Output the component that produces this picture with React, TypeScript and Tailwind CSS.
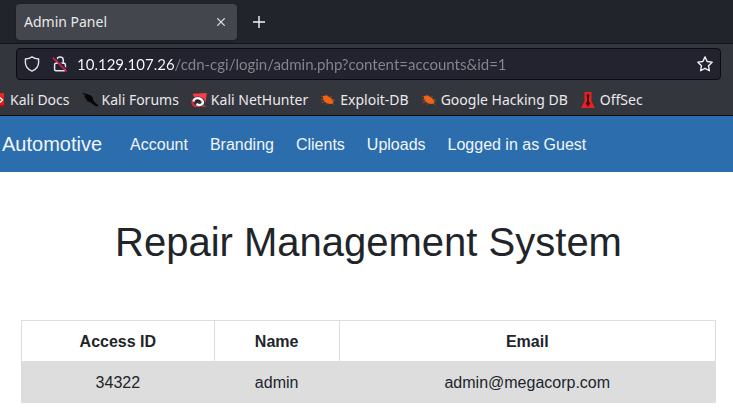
import type { ReactNode } from "react";

const uiFont = "font-['Noto_Sans',sans-serif]";

function ShieldIcon() {
  return (
    <svg className="h-4 w-4 shrink-0" viewBox="0 0 16 16" fill="none" stroke="#e4e4ea" strokeWidth="1.4" strokeLinejoin="round" aria-hidden="true">
      <path d="M8 .9C6.200 2.200 3.800 2.900 1.400 3v3.600c0 3.900 2.800 7 6.600 8.600 3.800-1.600 6.600-4.700 6.600-8.600V3C12.200 2.900 9.800 2.200 8 .9Z" />
    </svg>
  );
}

function InsecureLockIcon() {
  return (
    <svg className="h-4 w-4 shrink-0" viewBox="0 0 16 16" fill="none" strokeWidth="1.5" aria-hidden="true">
      <g stroke="#e4e4ea">
        <path d="M4.900 7V4.300a3.200 3.200 0 0 1 6.400 0V7" />
        <rect x="2.600" y="7.200" width="10.800" height="7.600" rx="1.300" />
      </g>
      <path d="M2 .8 15 13.800" stroke="#22232e" strokeWidth="1.500" />
      <path d="M.8 1.600 14.600 15.400" stroke="#e2184d" strokeWidth="1.500" />
    </svg>
  );
}

function StarIcon() {
  return (
    <svg className="h-4 w-4" viewBox="0 0 16 16" fill="none" stroke="#f0f0f4" strokeWidth="1.400" strokeLinejoin="round" aria-hidden="true">
      <path d="m8 .9 2.150 4.600 5 .65-3.650 3.500.9 5.100L8 12.300l-4.400 2.450.9-5.100L.85 6.150l5-.65Z" />
    </svg>
  );
}

function DocsIcon() {
  return (
    <svg className="h-4 w-4 shrink-0" viewBox="0 0 16 16" aria-hidden="true">
      <rect y="1" width="14" height="4" fill="#e8281c" />
      <rect y="5" width="14" height="9" fill="#f01414" />
      <rect y="13" width="14" height="2" fill="#9c1414" />
      <path d="M7 6h3.500L12.500 8l-2 2H7" fill="none" stroke="#fff" strokeWidth="1.500" />
    </svg>
  );
}

function ForumsIcon() {
  return (
    <svg className="h-4 w-4 shrink-0" viewBox="0 0 16 16" fill="#050505" aria-hidden="true">
      <path d="M0 .8 4.500 2 8.500 3.300 10.800 5.400 11.200 8.200 13.300 11l2.700 2-.6 1.600-2.700-.9-3.600-3L6.800 9.800 4 9l2-.6L2.400 6.200l2.300.3L1.500 3.700l2.600.5Z" />
    </svg>
  );
}

function NetHunterIcon() {
  return (
    <svg className="h-4 w-4 shrink-0" viewBox="0 0 16 16" aria-hidden="true">
      <path d="M1.500 1.800 15.800 1 14.500 10.500 12.500 6.500 8 4.500 3 5Z" fill="#ff3b44" />
      <path d="M.5 8.500 2.500 6 4 7 2.500 11 4 13.200h3.500L9 15H3L.5 12ZM10 14.800l4-2 .8 2.200Z" fill="#e0283a" />
      <path d="M2.500 9.500C3 6.500 5.500 5.600 8.300 6.400 12 7.800 13 10.800 10.600 12.600 9 13.500 7 13 5.500 12" fill="none" stroke="#fff" strokeWidth="2.300" />
      <path d="M4.300 10C5.500 8.300 7.500 8.300 8.800 9.600" fill="none" stroke="#2a1418" strokeWidth="1.200" />
    </svg>
  );
}

function ExploitIcon() {
  return (
    <svg className="h-4 w-4 shrink-0" viewBox="0 0 16 16" fill="#f06414" aria-hidden="true">
      <path d="M3 4C5 2.800 7.500 3.500 9.500 5c2.500 1.600 3.800 3.500 3.800 6.200-2.500 1.300-5.300.8-7.500-.7C3.500 9 2.500 6.500 3 4Z" />
      <path d="M3.500 5 1 4.500M4 7.500l-3 .3M5 9.500l-3.500 1.200M7.500 11.500l-2 .8M7 4 6.500 2.500M9.500 5.500 12 4M11.500 7.500h3M12.500 9.200l2.500-.3M12.500 11l1.500 2" fill="none" stroke="#b8561f" strokeWidth=".7" />
    </svg>
  );
}

function OffSecIcon() {
  return (
    <svg className="h-4 w-4 shrink-0" viewBox="0 0 16 16" aria-hidden="true">
      <path d="M4.500 0h7v9l3.500 7H1l3.500-7Z" fill="#e82020" />
      <path d="M8 1.500 9.800 3.800 8.900 5v4l1.500 3-1.700 1v1.600H7.300V13l-1.700-1 1.500-3V5l-.9-1.200Z" fill="#3a0d12" />
    </svg>
  );
}

function Bookmark({ icon, children }: { icon: ReactNode; children: ReactNode }) {
  return (
    <a href="#" className="flex shrink-0 items-center gap-1 whitespace-nowrap">
      {icon}
      {children}
    </a>
  );
}

function BrowserChrome() {
  return (
    <header className={`${uiFont} border-b border-[#0c0c0f] bg-[#34363e] text-[#e9e9ec]`}>
      <div className="flex h-11 items-center border-b border-[#15161b] bg-[#22242c] px-4">
        <div className="flex h-9 w-[221px] items-center justify-between rounded-sm bg-[#43464d] px-2 text-sm shadow">
          <span>Admin Panel</span>
          <button type="button" aria-label="Close tab" className="flex h-4 w-4 items-center justify-center">
            <svg className="h-2 w-2" viewBox="0 0 8 8" stroke="#e4e4e6" strokeWidth="1.200" aria-hidden="true">
              <path d="m.3.3 7.400 7.400M7.700.3.300 7.700" />
            </svg>
          </button>
        </div>
        <button type="button" aria-label="New tab" className="ml-3 flex h-5 w-5 items-center justify-center">
          <svg className="h-3 w-3" viewBox="0 0 12 12" stroke="#f4f4f6" strokeWidth="1.400" aria-hidden="true">
            <path d="M6 0v12M0 6h12" />
          </svg>
        </button>
      </div>
      <div className="py-1 pr-3 pl-4">
        <div className="flex h-8 items-center rounded-sm border border-[#0c0c10] bg-[#22232e] px-[7px]">
          <ShieldIcon />
          <span className="ml-3 flex">
            <InsecureLockIcon />
          </span>
          <input
            type="text"
            aria-label="Address"
            defaultValue="10.129.107.26/cdn-cgi/login/admin.php?content=accounts&id=1"
            className="ml-[9px] min-w-0 flex-1 bg-[linear-gradient(to_right,#fbfbfe_98px,#85868f_98px)] bg-clip-text font-['Lato',sans-serif] text-[15px] text-transparent outline-none"
          />
          <button type="button" aria-label="Bookmark this page">
            <StarIcon />
          </button>
        </div>
      </div>
      <nav aria-label="Bookmarks" className="-ml-[10px] flex h-[31px] items-center gap-3 overflow-hidden text-sm">
        <Bookmark icon={<DocsIcon />}>Kali Docs</Bookmark>
        <Bookmark icon={<ForumsIcon />}>Kali Forums</Bookmark>
        <Bookmark icon={<NetHunterIcon />}>Kali NetHunter</Bookmark>
        <Bookmark icon={<ExploitIcon />}>Exploit-DB</Bookmark>
        <Bookmark icon={<ExploitIcon />}>Google Hacking DB</Bookmark>
        <Bookmark icon={<OffSecIcon />}>OffSec</Bookmark>
      </nav>
    </header>
  );
}

export default function App() {
  return (
    <div className="overflow-hidden bg-white font-['Liberation_Sans',Arial,sans-serif] text-base text-[#212529]">
      <BrowserChrome />
      <nav aria-label="Main" className="flex h-14 items-center gap-7 bg-[#2c6dad] pl-[2px] whitespace-nowrap text-[#f1f6fb]">
        <a href="#" className="text-xl">Automotive</a>
        <div className="flex gap-[22px] pt-[2px]">
          <a href="#">Account</a>
          <a href="#">Branding</a>
          <a href="#">Clients</a>
          <a href="#">Uploads</a>
          <a href="#">Logged in as Guest</a>
        </div>
      </nav>
      <main className="pt-[46px] pr-[17px] pb-2 pl-[21px]">
        <h1 className="text-center text-[40px] leading-[48px]">Repair Management System</h1>
        <table className="mt-[54px] w-full border-collapse border border-[#dddddd] text-center">
          <thead>
            <tr>
              <th scope="col" className="border border-[#dddddd] px-2 pt-[9px] pb-[7px]">Access ID</th>
              <th scope="col" className="border border-[#dddddd] px-2 pt-[9px] pb-[7px]">Name</th>
              <th scope="col" className="border border-[#dddddd] px-2 pt-[9px] pb-[7px]">Email</th>
            </tr>
          </thead>
          <tbody>
            <tr className="bg-[#dddddd]">
              <td className="border border-[#dddddd] px-2 pt-[9px] pb-[7px]">34322</td>
              <td className="border border-[#dddddd] px-2 pt-[9px] pb-[7px]">admin</td>
              <td className="border border-[#dddddd] px-2 pt-[9px] pb-[7px]">admin@megacorp.com</td>
            </tr>
          </tbody>
        </table>
      </main>
    </div>
  );
}
